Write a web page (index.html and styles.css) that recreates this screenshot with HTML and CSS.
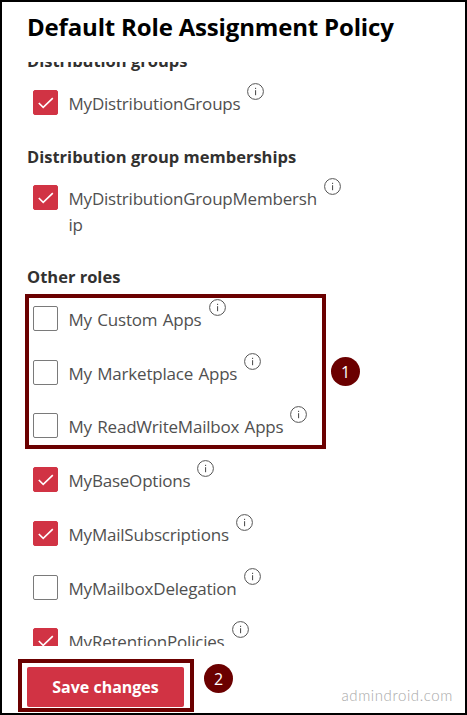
FILE: index.html
```html
<!DOCTYPE html>
<html lang="en">
<head>
<meta charset="utf-8">
<title>Default Role Assignment Policy</title>
<link rel="stylesheet" href="styles.css">
</head>
<body>
<svg class="defs" width="0" height="0" aria-hidden="true">
  <symbol id="info" viewBox="0 0 17 17">
    <circle cx="8.5" cy="8.5" r="7.9" fill="#fff" stroke="#555" stroke-width="1"/>
    <rect x="8" y="7.2" width="1.1" height="5" fill="#555"/>
    <rect x="8" y="4.8" width="1.1" height="1.2" fill="#555"/>
  </symbol>
  <symbol id="tick" viewBox="0 0 25 25">
    <path d="M5.8 13l4.4 4.4L19.8 8.2" fill="none" stroke="#fff" stroke-width="1.6"/>
  </symbol>
</svg>
<main class="frame">
  <h1 class="title">Default Role Assignment Policy</h1>
  <div class="scroll">
    <div class="scroll-inner">
      <h2 class="heading heading-first">Distribution groups</h2>
      <div class="row">
        <span class="box on"><svg class="tick"><use href="#tick"/></svg></span>
        <span class="label">MyDistributionGroups</span>
        <svg class="info"><use href="#info"/></svg>
      </div>
      <h2 class="heading">Distribution group memberships</h2>
      <div class="row row-wrapped">
        <span class="box on"><svg class="tick"><use href="#tick"/></svg></span>
        <span class="label">MyDistributionGroupMembersh<br>ip</span>
        <svg class="info"><use href="#info"/></svg>
      </div>
      <h2 class="heading heading-tight">Other roles</h2>
      <div class="callout">
        <div class="highlight">
          <div class="row">
            <span class="box"></span>
            <span class="label">My Custom Apps</span>
            <svg class="info"><use href="#info"/></svg>
          </div>
          <div class="row">
            <span class="box"></span>
            <span class="label">My Marketplace Apps</span>
            <svg class="info"><use href="#info"/></svg>
          </div>
          <div class="row">
            <span class="box"></span>
            <span class="label">My ReadWriteMailbox Apps</span>
            <svg class="info"><use href="#info"/></svg>
          </div>
        </div>
        <span class="badge">1</span>
      </div>
      <div class="rest">
        <div class="row">
          <span class="box on"><svg class="tick"><use href="#tick"/></svg></span>
          <span class="label">MyBaseOptions</span>
          <svg class="info"><use href="#info"/></svg>
        </div>
        <div class="row">
          <span class="box on"><svg class="tick"><use href="#tick"/></svg></span>
          <span class="label">MyMailSubscriptions</span>
          <svg class="info"><use href="#info"/></svg>
        </div>
        <div class="row">
          <span class="box"></span>
          <span class="label">MyMailboxDelegation</span>
          <svg class="info"><use href="#info"/></svg>
        </div>
        <div class="row">
          <span class="box on"><svg class="tick"><use href="#tick"/></svg></span>
          <span class="label">MyRetentionPolicies</span>
          <svg class="info"><use href="#info"/></svg>
        </div>
      </div>
    </div>
  </div>
  <footer class="footer">
    <div class="save-highlight"><button class="save" type="button">Save changes</button></div>
    <span class="badge badge-save">2</span>
    <span class="mark">admindroid.com</span>
  </footer>
</main>
</body>
</html>
```
FILE: styles.css
```css
* { box-sizing: border-box; }
html, body { margin: 0; padding: 0; background: #fff; }
body { width: 467px; height: 715px; overflow: hidden; font-family: "Open Sans", "Noto Sans", sans-serif; }
.defs { position: absolute; }
.frame {
  width: 467px; height: 715px; border: 2px solid #000;
  display: flex; flex-direction: column; background: #fff;
}
.title {
  margin: 0; height: 60px; padding: 9px 0 0 25px;
  font-size: 24px; line-height: 32px; font-weight: 700; color: #000;
  letter-spacing: -0.17px; flex: none; white-space: nowrap;
}
.scroll { flex: 1; min-height: 0; overflow: hidden; }
.scroll-inner { margin-top: -12px; padding-left: 26px; }
.heading {
  margin: 0 0 17px -1px; height: 22px;
  font-size: 16.5px; line-height: 22px; font-weight: 700; color: #323130;
  white-space: nowrap;
}
.heading-first { margin-bottom: 18px; }
.heading-tight { margin-bottom: 6px; }
.row { display: flex; align-items: flex-start; min-height: 25px; padding-left: 5px; margin-bottom: 29px; }
.row-wrapped { margin-bottom: 28px; }
.box {
  flex: none; width: 25px; height: 25px; border: 1px solid #7a7a7a; border-radius: 2px; background: #fff;
  margin-right: 10.5px;
}
.box.on { background: #d13344; border-color: #d13344; }
.tick { display: block; width: 25px; height: 25px; margin: -1px; }
.label {
  margin-top: 1px; font-size: 17px; line-height: 26px; color: #505050; white-space: nowrap;
  letter-spacing: -0.21px; word-spacing: 1.2px;
}
.info { flex: none; width: 17px; height: 17px; margin: -7px 0 0 7px; }
.callout { display: flex; align-items: center; gap: 5px; margin: 0 0 18px -3px; }
.highlight {
  width: 301px; border: 4px solid #6b0000; padding: 8px 0 5px 4px; flex: none;
  display: flex; flex-direction: column; gap: 26.67px;
}
.highlight .row { margin: 0; padding-left: 0; }
.rest { display: flex; flex-direction: column; gap: 26.67px; }
.rest .row { margin: 0; }
.badge {
  flex: none; width: 29px; height: 29px; border-radius: 50%; background: #6b0000; color: #fff;
  display: flex; align-items: center; justify-content: center;
  font-size: 16px; line-height: 1; font-family: "Open Sans", sans-serif;
}
.footer { flex: none; height: 67px; display: flex; align-items: flex-start; padding: 13px 12px 0 16px; }
.save-highlight { width: 176px; height: 53px; border: 4px solid #6b0000; padding: 4px 4px 0 5px; flex: none; }
.save {
  display: block; width: 157px; height: 40px; border: 0; border-radius: 2px; background: #d13344; color: #fff;
  font-family: inherit; font-size: 16px; font-weight: 700; padding: 0;
}
.badge-save { margin: 5px 0 0 10px; }
.mark {
  margin: 27px 0 0 auto; font-size: 15px; line-height: 18px; font-weight: 300; color: #a8a8a8; letter-spacing: 0.6px;
  font-family: "Lato", sans-serif;
}
```
